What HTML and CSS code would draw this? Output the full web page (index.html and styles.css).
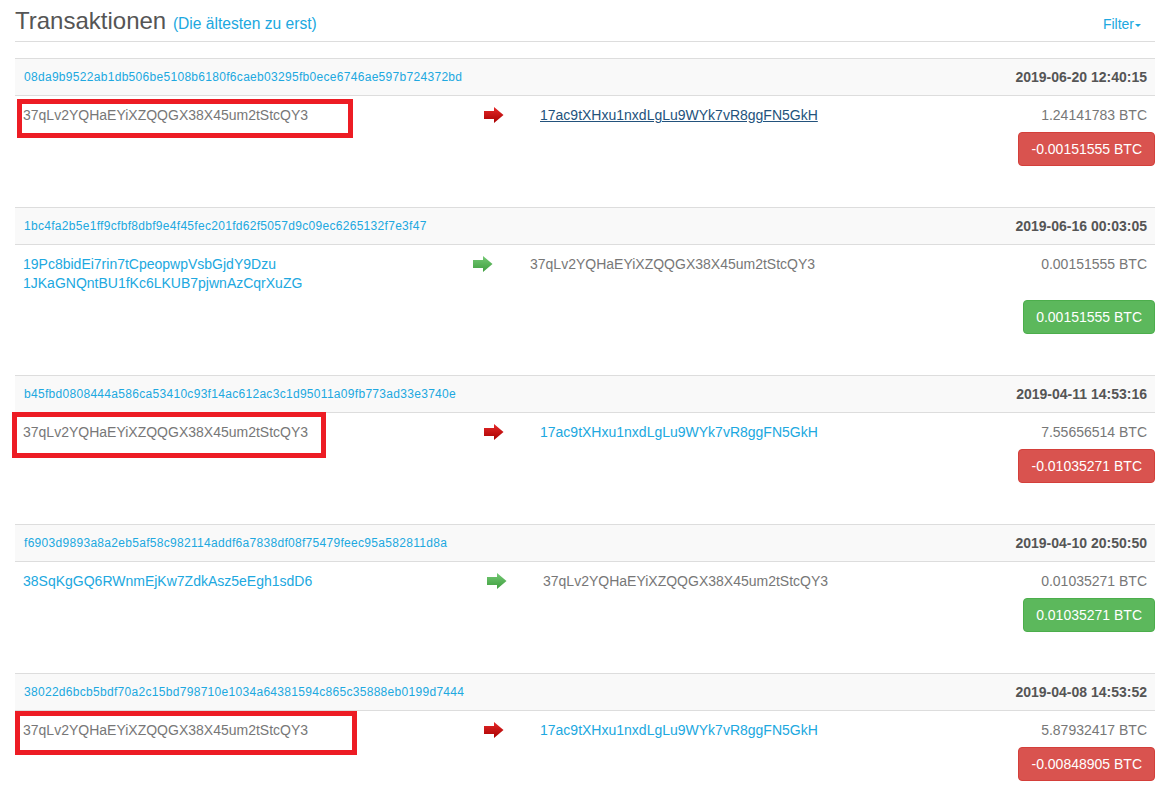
FILE: index.html
```html
<!DOCTYPE html>
<html lang="de">
<head>
    <meta charset="UTF-8">
    <title>Transaktionen</title>
    <link rel="stylesheet" href="styles.css">
</head>
<body>
    <!-- shared gradients for the arrows -->
    <svg class="svg-defs" width="0" height="0">
        <defs>
            <linearGradient id="arrow-red" x1="0" y1="0" x2="0" y2="1">
                <stop offset="0" stop-color="#e62a2a"/>
                <stop offset="1" stop-color="#a80000"/>
            </linearGradient>
            <linearGradient id="arrow-green" x1="0" y1="0" x2="0" y2="1">
                <stop offset="0" stop-color="#74c974"/>
                <stop offset="1" stop-color="#3f9e3f"/>
            </linearGradient>
        </defs>
    </svg>

    <div class="container">
        <div class="page-header">
            <h2>Transaktionen <small>(Die ältesten zu erst)</small></h2>
            <a href="#" class="filter">Filter<span class="caret"></span></a>
        </div>

        <div class="tx">
            <div class="tx-head">
                <a href="#" class="hash">08da9b9522ab1db506be5108b6180f6caeb03295fb0ece6746ae597b724372bd</a>
                <span class="date">2019-06-20 12:40:15</span>
            </div>
            <div class="tx-body">
                <div class="tx-in">
                    <span>37qLv2YQHaEYiXZQQGX38X45um2tStcQY3</span>
                    <span class="mark mark-1"></span>
                </div>
                <div class="tx-arrow">
                    <svg width="20" height="16" viewBox="0 0 20 16"><path d="M0 4H10V0L19.5 8L10 16V12H0Z" fill="url(#arrow-red)"/></svg>
                </div>
                <div class="tx-out"><a href="#" class="active">17ac9tXHxu1nxdLgLu9WYk7vR8ggFN5GkH</a></div>
                <div class="tx-amount">1.24141783 BTC</div>
            </div>
            <div class="tx-foot"><button class="btn btn-danger">-0.00151555 BTC</button></div>
        </div>

        <div class="tx">
            <div class="tx-head">
                <a href="#" class="hash">1bc4fa2b5e1ff9cfbf8dbf9e4f45fec201fd62f5057d9c09ec6265132f7e3f47</a>
                <span class="date">2019-06-16 00:03:05</span>
            </div>
            <div class="tx-body narrow">
                <div class="tx-in">
                    <a href="#">19Pc8bidEi7rin7tCpeopwpVsbGjdY9Dzu</a><br>
                    <a href="#">1JKaGNQntBU1fKc6LKUB7pjwnAzCqrXuZG</a>
                </div>
                <div class="tx-arrow">
                    <svg width="20" height="16" viewBox="0 0 20 16"><path d="M0 4H10V0L19.5 8L10 16V12H0Z" fill="url(#arrow-green)"/></svg>
                </div>
                <div class="tx-out">37qLv2YQHaEYiXZQQGX38X45um2tStcQY3</div>
                <div class="tx-amount">0.00151555 BTC</div>
            </div>
            <div class="tx-foot"><button class="btn btn-success">0.00151555 BTC</button></div>
        </div>

        <div class="tx">
            <div class="tx-head">
                <a href="#" class="hash">b45fbd0808444a586ca53410c93f14ac612ac3c1d95011a09fb773ad33e3740e</a>
                <span class="date">2019-04-11 14:53:16</span>
            </div>
            <div class="tx-body">
                <div class="tx-in">
                    <span>37qLv2YQHaEYiXZQQGX38X45um2tStcQY3</span>
                    <span class="mark mark-2"></span>
                </div>
                <div class="tx-arrow">
                    <svg width="20" height="16" viewBox="0 0 20 16"><path d="M0 4H10V0L19.5 8L10 16V12H0Z" fill="url(#arrow-red)"/></svg>
                </div>
                <div class="tx-out"><a href="#">17ac9tXHxu1nxdLgLu9WYk7vR8ggFN5GkH</a></div>
                <div class="tx-amount">7.55656514 BTC</div>
            </div>
            <div class="tx-foot"><button class="btn btn-danger">-0.01035271 BTC</button></div>
        </div>

        <div class="tx">
            <div class="tx-head">
                <a href="#" class="hash">f6903d9893a8a2eb5af58c982114addf6a7838df08f75479feec95a582811d8a</a>
                <span class="date">2019-04-10 20:50:50</span>
            </div>
            <div class="tx-body wide">
                <div class="tx-in">
                    <a href="#">38SqKgGQ6RWnmEjKw7ZdkAsz5eEgh1sdD6</a>
                </div>
                <div class="tx-arrow">
                    <svg width="20" height="16" viewBox="0 0 20 16"><path d="M0 4H10V0L19.5 8L10 16V12H0Z" fill="url(#arrow-green)"/></svg>
                </div>
                <div class="tx-out">37qLv2YQHaEYiXZQQGX38X45um2tStcQY3</div>
                <div class="tx-amount">0.01035271 BTC</div>
            </div>
            <div class="tx-foot"><button class="btn btn-success">0.01035271 BTC</button></div>
        </div>

        <div class="tx">
            <div class="tx-head">
                <a href="#" class="hash">38022d6bcb5bdf70a2c15bd798710e1034a64381594c865c35888eb0199d7444</a>
                <span class="date">2019-04-08 14:53:52</span>
            </div>
            <div class="tx-body">
                <div class="tx-in">
                    <span>37qLv2YQHaEYiXZQQGX38X45um2tStcQY3</span>
                    <span class="mark mark-3"></span>
                </div>
                <div class="tx-arrow">
                    <svg width="20" height="16" viewBox="0 0 20 16"><path d="M0 4H10V0L19.5 8L10 16V12H0Z" fill="url(#arrow-red)"/></svg>
                </div>
                <div class="tx-out"><a href="#">17ac9tXHxu1nxdLgLu9WYk7vR8ggFN5GkH</a></div>
                <div class="tx-amount">5.87932417 BTC</div>
            </div>
            <div class="tx-foot"><button class="btn btn-danger">-0.00848905 BTC</button></div>
        </div>
    </div>
</body>
</html>
```

FILE: styles.css
```css
body {
    margin: 0;
    font-family: "Liberation Sans", Arial, sans-serif;
    font-size: 14px;
    line-height: 19px;
    color: #777;
    background-color: #fff;
}
a {
    color: #20a8e0;
    text-decoration: none;
}
a.active {
    color: #23527c;
    text-decoration: underline;
}
.svg-defs {
    position: absolute;
    width: 0;
    height: 0;
}
.container {
    width: 1140px;
    margin-left: 15px;
}
.page-header {
    display: flex;
    justify-content: space-between;
    align-items: baseline;
    padding: 8px 0 7px;
    border-bottom: 1px solid #ddd;
    margin-bottom: 16px;
}
.page-header h2 {
    margin: 0;
    font-size: 24px;
    line-height: 26px;
    font-weight: normal;
    color: #555;
}
.page-header small {
    font-size: 15.6px;
    line-height: 1;
    color: #20a8e0;
}
.filter {
    margin-right: 14px;
}
.caret {
    display: inline-block;
    width: 0;
    height: 0;
    margin-left: 1px;
    vertical-align: middle;
    border-top: 3px solid;
    border-left: 3px solid transparent;
    border-right: 3px solid transparent;
}
.tx {
    margin-bottom: 41px;
}
.tx-head {
    display: flex;
    justify-content: space-between;
    align-items: center;
    padding: 8px;
    line-height: 20px;
    background-color: #f9f9f9;
    border-top: 1px solid #ddd;
    border-bottom: 1px solid #ddd;
}
.hash {
    font-size: 12px;
    letter-spacing: 0.3px;
    margin-left: 1px;
}
.date {
    font-weight: bold;
    color: #555;
}
.tx-body {
    display: grid;
    grid-template-columns: 461px 56px 1fr auto;
}
.tx-body.narrow {
    grid-template-columns: 450px 57px 1fr auto;
}
.tx-body.wide {
    grid-template-columns: 464px 56px 1fr auto;
}
.tx-body > div {
    padding: 10px 8px 7px;
}
.tx-in {
    position: relative;
}
.tx-arrow svg {
    display: block;
    margin-top: 1px;
}
.tx-amount {
    text-align: right;
}
.tx-foot {
    text-align: right;
}
.btn {
    font-family: inherit;
    font-size: 14px;
    line-height: 20px;
    padding: 6px 12px;
    border: 1px solid transparent;
    border-radius: 4px;
    color: #fff;
    cursor: pointer;
}
.btn-danger {
    background-color: #d9534f;
    border-color: #d43f3a;
}
.btn-success {
    background-color: #5cb85c;
    border-color: #4cae4c;
}
/* red boxes drawn over the own address */
.mark {
    position: absolute;
    box-sizing: border-box;
    border: 5px solid #ed1c24;
}
.mark-1 {
    left: 2px;
    top: 3px;
    width: 336px;
    height: 39px;
}
.mark-2 {
    left: -3px;
    top: -1px;
    width: 314px;
    height: 46px;
}
.mark-3 {
    left: 0;
    top: 0;
    width: 342px;
    height: 44px;
}
```
